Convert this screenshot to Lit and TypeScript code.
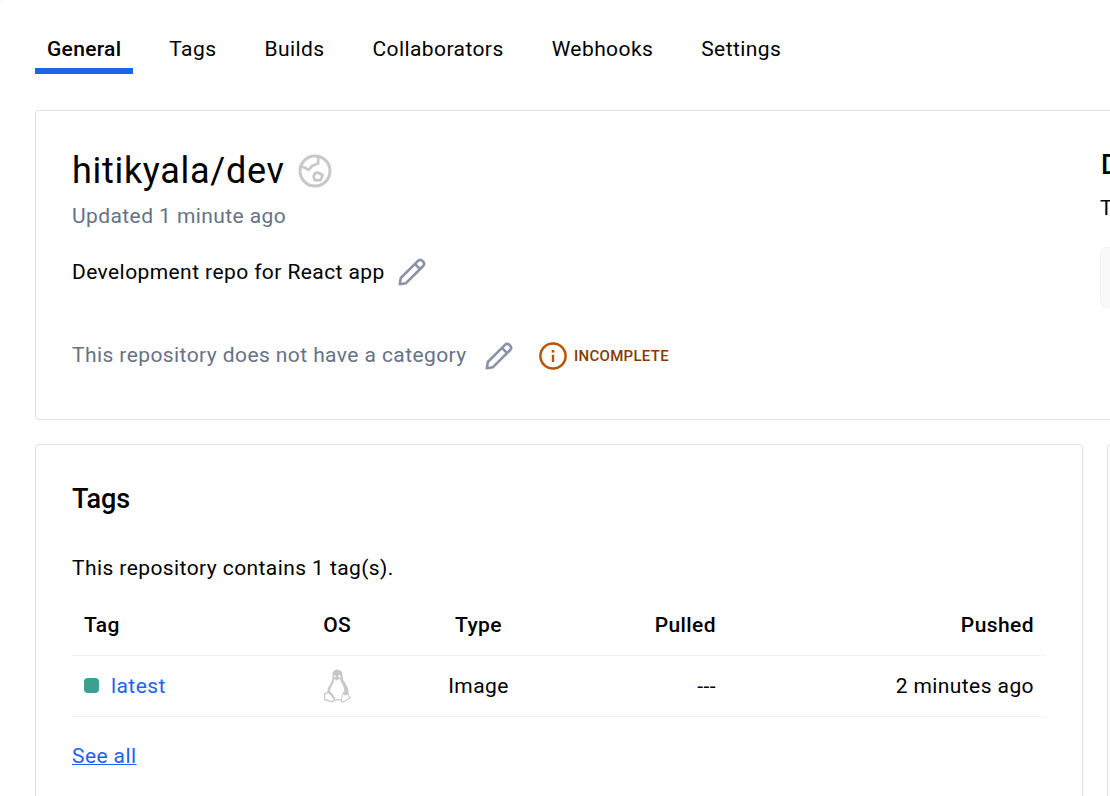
import { LitElement, html, css } from "lit";
import { customElement, property } from "lit/decorators.js";

const pencil = html`<svg class="pencil" width="30" height="30" viewBox="0 0 30 30" fill="none" stroke="#8993a5" stroke-width="2.6" stroke-linejoin="round" aria-hidden="true">
  <path d="M2.8 27.2 L3.8 21 L21 3.8 C24 .9 29 5.8 26.2 9 L9 26.2 Z M17.9 6.9 L23.1 12.1"/>
</svg>`;

const globe = html`<svg class="globe" width="34" height="34" viewBox="0 0 34 34" fill="none" stroke="#c8c8c8" stroke-width="3" aria-hidden="true">
  <circle cx="17" cy="17" r="15"/>
  <path stroke-width="2.7" d="M3.2 12 L10.6 15.8 L14 12 L20.2 9.4 V2.6"/>
  <path stroke-width="2.8" stroke-linejoin="round" d="M17.2 18.8 L20.4 18.7 L24.7 21.3 L22.6 26 L16.8 26.4 L15.6 22.4 Z"/>
</svg>`;

const info = html`<svg width="28" height="28" viewBox="0 0 28 28" fill="none" stroke="#b85504" aria-hidden="true">
  <circle cx="14" cy="14" r="12.6" stroke-width="2.5"/>
  <path d="M14 12.7 V20" stroke-width="2.4"/><path d="M14 8 V10.6" stroke-width="2.6"/>
</svg>`;

const penguin = html`<svg width="28" height="34" viewBox="-0.4 0 28 34" aria-hidden="true">
  <path fill="#c8c8c8" d="M14 .5 C10.500 .5 8.800 3 9 6.300 C9.100 9.500 9.300 11 7.500 14 C5.500 17 4 19.500 4 23 L1 24 C.2 25.500 1 27 .5 30.500 C.5 32 5 32 7.500 33.300 C9.500 34 11 32.500 11.500 31.500 H17 C18 34 20.500 34 22 32.500 C24 31 27 30 27.300 28.300 C25.500 26.500 25.500 25 25 23.500 C25.200 18.500 22.500 15 20.500 12 C18.700 9.300 19.500 7 18.700 4 C18 1.700 16.500 .5 14 .5 Z"/>
  <path fill="#fff" d="M10.500 12.500 C12.500 14.200 15 14 17.300 12.200 C18.800 15.200 21 18 21 22.500 C19.700 23 19 24 18.800 26 L17.600 30.200 H11.600 C11.500 27.600 9 24.500 6.600 22.600 C6.600 18.500 9.600 15.500 10.500 12.500 Z"/>
  <path fill="#fff" d="M10.700 9.800 L13.200 11.400 L16.900 9.600 L17.300 12.400 C15 14.200 12.500 14.300 10.400 12.700 Z"/>
  <path fill="#fff" d="M1.900 25.200 L4.800 24.300 C6.800 25.200 8.300 28 10.200 30 C10.400 32 8.800 32.500 7.500 32 C5.500 31 3.500 30.800 1.700 30.300 Z M18.500 30.500 C19.100 28.800 19.400 27 20 25.300 C21.500 27.300 23.500 26.500 24.500 25.300 C24.500 27 25.500 27.700 26.200 28.600 L21 32 C19.500 32.700 18.300 32.200 18.500 30.500 Z"/>
  <path fill="#fff" d="M10.500 7.800 C10.300 5.800 12.200 5.600 12.400 7.600 L11.300 8.500 Z M14.700 7.600 C14.700 5.500 17.200 5.500 17.100 7.700 L16.600 8.700 Z"/>
</svg>`;

const base = css`
  * { box-sizing: border-box; }
`;

@customElement("repo-tabs")
class RepoTabs extends LitElement {
  @property() active = "General";
  static styles = [base, css`
    :host { display: block; }
    nav { display: flex; gap: 24px; height: 50px; }
    .tab { padding: 0 12px; height: 50px; line-height: 50px; border-bottom: 6px solid transparent; white-space: nowrap; }
    .active { font-weight: 500; border-color: #1d63ed; letter-spacing: 0.3px; }
  `];
  render() {
    return html`<nav>${["General", "Tags", "Builds", "Collaborators", "Webhooks", "Settings"].map(
      (t) => html`<div class="tab ${t === this.active ? "active" : ""}">${t}</div>`
    )}</nav>`;
  }
}

@customElement("repo-summary")
class RepoSummary extends LitElement {
  static styles = [base, css`
    :host { display: flex; width: 1500px; height: 310px; border: 1px solid #e1e2e6; border-radius: 3px; padding: 35px 36px; }
    .main { width: 1028px; flex: none; padding-top: 1px; }
    .row { display: flex; align-items: center; white-space: nowrap; }
    h1 { margin: 0; font-size: 36px; font-weight: 400; line-height: 48px; letter-spacing: 0.7px; }
    .title { height: 48px; gap: 13px; }
    .muted { color: #677285; }
    .updated { height: 42px; }
    .desc { height: 30px; margin-top: 20px; gap: 12.4px; }
    .cat { height: 30px; margin-top: 54px; }
    .cat .muted { padding-bottom: 2px; }
    .cat .pencil { margin: 0 25px 0 17.3px; }
    .badge { margin-left: 7px; font-size: 15px; font-weight: 500; color: #843b04; letter-spacing: 0.3px; }
    svg { display: block; flex: none; }
    .side { flex: 1; white-space: nowrap; }
    h2 { margin: 1px 0 0 1px; font-size: 27px; line-height: 36px; font-weight: 500; letter-spacing: 0; }
    .hint { line-height: 30px; margin-top: 10px; }
    .command { height: 61px; margin-top: 24px; border: 1px solid #f3f3f4; border-radius: 6px; background: #f9f9fa; }
  `];
  render() {
    return html`
      <div class="main">
        <div class="row title"><h1>hitikyala/dev</h1>${globe}</div>
        <div class="row updated muted">Updated 1 minute ago</div>
        <div class="row desc"><span>Development repo for React app</span>${pencil}</div>
        <div class="row cat"><span class="muted">This repository does not have a category</span>${pencil}${info}<span class="badge">INCOMPLETE</span></div>
      </div>
      <div class="side"><h2>D</h2><div class="hint">T</div><div class="command"></div></div>`;
  }
}

@customElement("repo-tags")
class RepoTags extends LitElement {
  static styles = [base, css`
    :host { display: block; width: 1048px; height: 420px; flex: none; border: 1px solid #e1e2e6; border-radius: 3px; padding: 36px; }
    h2 { margin: 0; font-size: 27px; line-height: 36px; font-weight: 500; letter-spacing: -0.1px; }
    .count { margin: 36px 0 12px; line-height: 30px; }
    .grid { display: grid; grid-template-columns: 195px 140.5px 142px 178.5px 318px; align-items: center; height: 61px; border-bottom: 1px solid #f2f2f4; }
    .grid > * { padding: 0 12px; white-space: nowrap; }
    .head { font-weight: 500; }
    .c { text-align: center; justify-self: center; }
    .r { text-align: right; }
    .name { display: flex; align-items: center; gap: 12px; color: #1d63ed; }
    .dot { width: 15px; height: 15px; border-radius: 4px; background: #3ba08d; margin-bottom: 1px; }
    .icon { display: flex; }
    a { color: #1d63ed; display: inline-block; margin-top: 24px; line-height: 30px; text-decoration: underline; text-decoration-thickness: 1px; text-underline-offset: 1px; }
  `];
  render() {
    return html`
      <h2>Tags</h2>
      <p class="count">This repository contains 1 tag(s).</p>
      <div class="grid head"><span>Tag</span><span class="c">OS</span><span class="c">Type</span><span class="r">Pulled</span><span class="r">Pushed</span></div>
      <div class="grid"><span class="name"><i class="dot"></i>latest</span><span class="c icon">${penguin}</span><span class="c">Image</span><span class="r">---</span><span class="r">2 minutes ago</span></div>
      <a>See all</a>`;
  }
}

@customElement("app-root")
class AppRoot extends LitElement {
  static styles = [base, css`
    :host { display: block; height: 796px; overflow: hidden; background: #eee; font: 400 21px/30px Roboto, sans-serif; letter-spacing: 0.415px; color: #000; }
    .page { height: 796px; background: #fff; border-top-left-radius: 3px; padding: 24px 0 0 35px; overflow: hidden; }
    repo-summary { margin-top: 36px; }
    .lower { display: flex; gap: 24px; margin-top: 24px; }
    .next { width: 400px; flex: none; height: 420px; border: 1px solid #e1e2e6; border-radius: 3px; }
  `];
  render() {
    return html`<div class="page">
      <repo-tabs></repo-tabs>
      <repo-summary></repo-summary>
      <div class="lower"><repo-tags></repo-tags><div class="next"></div></div>
    </div>`;
  }
}
